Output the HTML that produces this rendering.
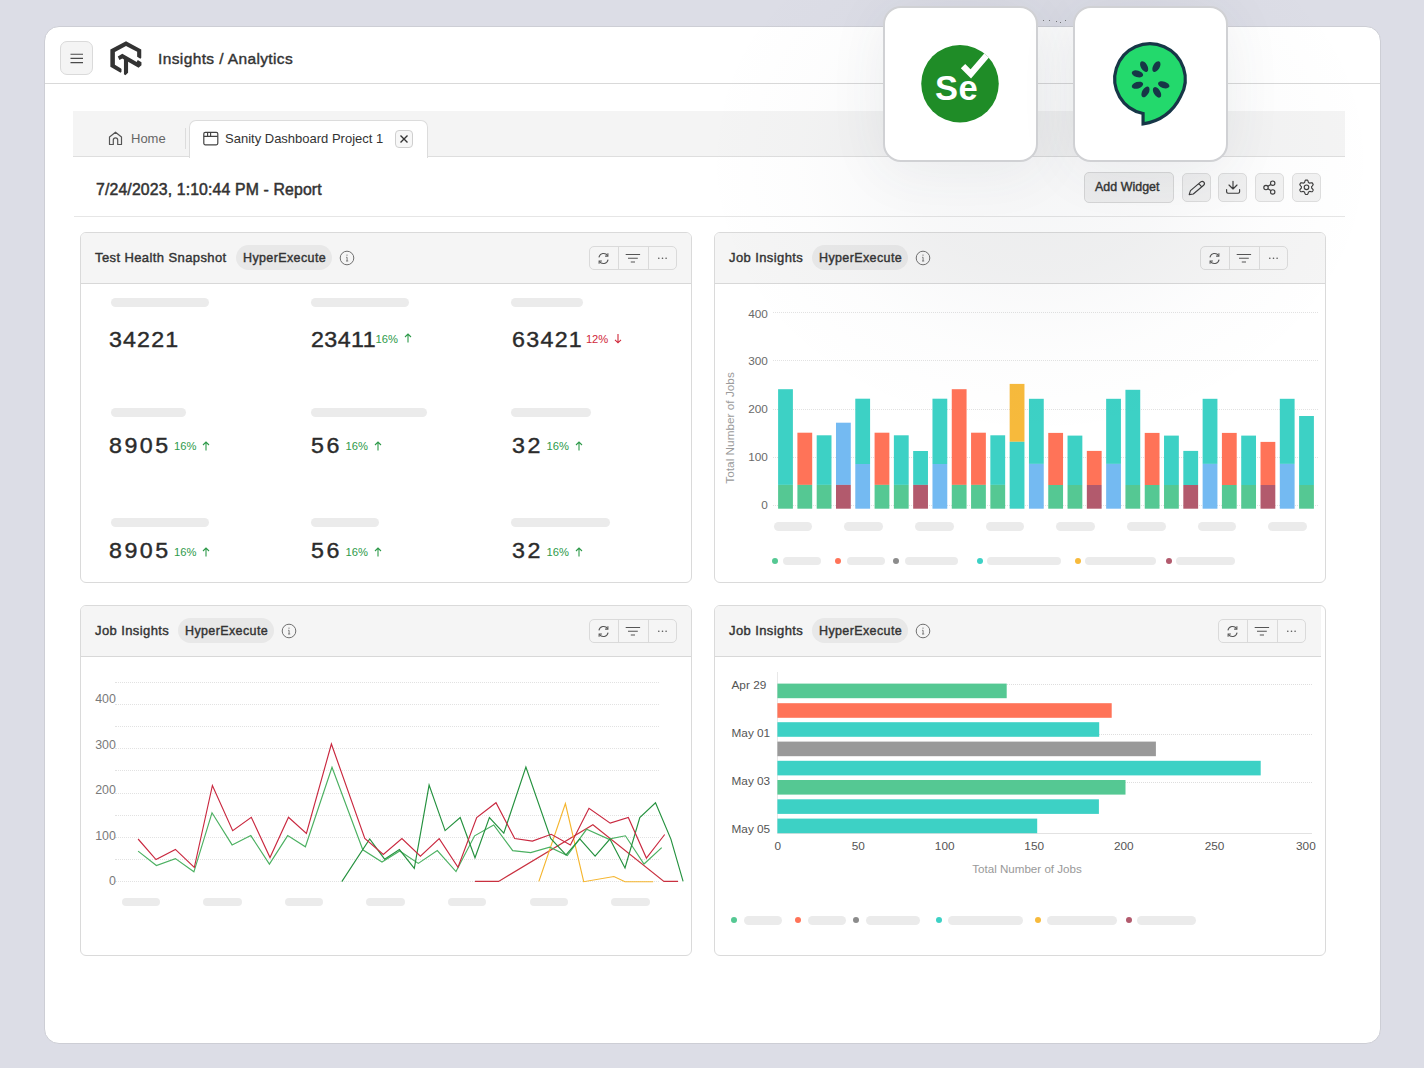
<!DOCTYPE html><html><head><meta charset="utf-8"><style>
*{margin:0;padding:0;box-sizing:border-box}
html,body{width:1424px;height:1068px;overflow:hidden;background:#dcdde6;font-family:"Liberation Sans",sans-serif;color:#2f2f2f}
div,span,svg{position:absolute}
.t{white-space:nowrap;line-height:1}
.b{font-weight:bold}
.sb{font-weight:normal;-webkit-text-stroke:0.4px currentColor}
.btn{border:1px solid #dadada;background:#f2f2f2;border-radius:5px}
.card{background:#fff;border:1px solid #dadada;border-radius:6px;overflow:hidden}
.chead{left:0;top:0;right:0;height:51px;background:#f5f5f5;border-bottom:1px solid #d8d8d8}
.pill{background:#e8e8e8;border-radius:13px}
.sk{background:#ebebeb;border-radius:5px}
.logo{z-index:6;top:6px;width:155px;height:156px;background:#fff;border:2px solid #d0d1d4;border-radius:18px;box-shadow:0 8px 60px rgba(60,70,90,0.07)}
.grp{border:1px solid #dadada;border-radius:5px}
</style></head><body>
<div style="left:44px;top:26px;width:1337px;height:1018px;background:#fff;border:1px solid #cdced5;border-radius:15px"></div>
<div style="left:45px;top:83px;width:1335px;height:1px;background:#d9d9d9"></div>
<div class="btn" style="left:60px;top:41px;width:33px;height:34px;border-radius:7px;background:#f4f4f4"></div>
<svg style="left:70px;top:53px" width="14" height="11" viewBox="0 0 14 11"><path d="M0.5 1.2h12.5M0.5 5.4h12.5M0.5 9.6h12.5" stroke="#4a4a4a" stroke-width="1.15" fill="none"/></svg>
<svg style="left:105px;top:36px" width="44" height="44" viewBox="0 0 1068 1068">
<path d="M130 330 L510 125 L880 330 L880 530 L860 555 L780 505 L780 385 L510 240 L240 390 L240 700 L380 780 L400 800 L400 865 L380 890 L130 745 Z" fill="#333"/>
<path d="M310 495 L420 430 L770 630 L795 585 L885 640 L885 710 L815 770 L560 625 L560 890 L495 950 L460 930 L460 570 L420 545 L350 580 Z" fill="#333"/>
</svg>
<span class="t sb" style="left:158px;top:51px;font-size:15.5px;color:#333;letter-spacing:0.38px">Insights / Analytics</span>
<div style="left:73px;top:111px;width:1272px;height:46px;background:#f4f4f4;border-bottom:1px solid #dedede"></div>
<svg style="left:108px;top:131px" width="15" height="15" viewBox="0 0 15 15"><path d="M1.5 13.5 V6 L7.5 1.2 L13.5 6 V13.5 H9.7 V9 A2.2 2.2 0 0 0 5.3 9 V13.5 Z" fill="none" stroke="#555" stroke-width="1.2" stroke-linejoin="round"/></svg>
<span class="t" style="left:131px;top:132px;font-size:13px;color:#666">Home</span>
<div style="left:185px;top:128px;width:1px;height:21px;background:#dcdcdc"></div>
<div style="left:189px;top:120px;width:239px;height:38px;background:#fff;border:1px solid #dcdcdc;border-bottom:none;border-radius:7px 7px 0 0"></div>
<svg style="left:203px;top:131px" width="16" height="15" viewBox="0 0 16 15"><rect x="0.8" y="1.3" width="14" height="12.5" rx="1.5" fill="none" stroke="#444" stroke-width="1.2"/><path d="M0.8 5.4 H14.8 M4.6 1.3 V5.4 M7.6 1.3 V5.4" stroke="#444" stroke-width="1.15" fill="none"/></svg>
<span class="t" style="left:225px;top:132px;font-size:13px;color:#333">Sanity Dashboard Project 1</span>
<div style="left:395px;top:130px;width:18px;height:18px;border:1px solid #cfcfcf;border-radius:4px;background:#f7f7f7"></div>
<svg style="left:399px;top:134px" width="10" height="10" viewBox="0 0 10 10"><path d="M1.5 1.5 L8.5 8.5 M8.5 1.5 L1.5 8.5" stroke="#333" stroke-width="1.4"/></svg>
<span class="t sb" style="left:96px;top:182px;font-size:15.8px;color:#333;letter-spacing:0.15px;-webkit-text-stroke:0.5px #333">7/24/2023, 1:10:44 PM - Report</span>
<div style="left:74px;top:216px;width:1271px;height:1px;background:#e6e6e6"></div>
<div class="btn" style="left:1084px;top:172px;width:90px;height:31px"></div>
<span class="t sb" style="left:1095px;top:181px;font-size:12.4px;color:#333;letter-spacing:0.05px">Add Widget</span>
<div class="btn" style="left:1182px;top:173px;width:29px;height:29px;border-color:#dedede"></div>
<div class="btn" style="left:1218px;top:173px;width:29px;height:29px;border-color:#dedede"></div>
<div class="btn" style="left:1255px;top:173px;width:29px;height:29px;border-color:#dedede"></div>
<div class="btn" style="left:1292px;top:173px;width:29px;height:29px;border-color:#dedede"></div>
<svg style="left:1182px;top:173px" width="29" height="29" viewBox="0 0 29 29"><path d="M7.2 21.6 L8.46 17.66 L18.78 8.92 A2.2 2.2 0 0 1 21.62 12.28 L11.3 21.0 Z M16.87 10.54 L19.71 13.9" fill="none" stroke="#3d3d3d" stroke-width="1.15" stroke-linejoin="round"/></svg>
<svg style="left:1218px;top:173px" width="29" height="29" viewBox="0 0 29 29"><path d="M15 8.2 V15.8 M11 12 L15 16 L19 12 M8.6 16.6 V18.8 Q8.6 20.2 10 20.2 H20.2 Q21.6 20.2 21.6 18.8 V16.6" fill="none" stroke="#3d3d3d" stroke-width="1.15" stroke-linejoin="round" stroke-linecap="round"/></svg>
<svg style="left:1255px;top:173px" width="29" height="29" viewBox="0 0 29 29"><circle cx="17.7" cy="10.2" r="2.2" fill="none" stroke="#3d3d3d" stroke-width="1.15"/><circle cx="11" cy="14.5" r="2.2" fill="none" stroke="#3d3d3d" stroke-width="1.15"/><circle cx="17.7" cy="18.9" r="2.2" fill="none" stroke="#3d3d3d" stroke-width="1.15"/><path d="M12.9 13.3 L15.8 11.4 M12.9 15.7 L15.8 17.6" stroke="#3d3d3d" stroke-width="1.15"/></svg>
<svg style="left:1292px;top:173px" width="29" height="29" viewBox="0 0 29 29"><path d="M14.50 7.05 L14.88 7.06 L15.26 7.09 L15.61 7.26 L15.89 7.76 L16.10 8.31 L16.27 8.87 L16.39 9.38 L16.59 9.60 L16.84 9.71 L17.07 9.84 L17.30 9.98 L17.53 10.13 L17.82 10.20 L18.32 10.05 L18.88 9.92 L19.47 9.83 L20.04 9.82 L20.37 10.04 L20.58 10.35 L20.78 10.68 L20.96 11.01 L21.12 11.35 L21.15 11.75 L20.86 12.23 L20.49 12.70 L20.09 13.11 L19.71 13.47 L19.62 13.76 L19.64 14.03 L19.65 14.30 L19.64 14.57 L19.62 14.84 L19.71 15.13 L20.09 15.49 L20.49 15.90 L20.86 16.37 L21.15 16.85 L21.12 17.25 L20.96 17.59 L20.78 17.93 L20.58 18.25 L20.37 18.56 L20.04 18.78 L19.47 18.77 L18.88 18.68 L18.32 18.55 L17.82 18.40 L17.53 18.47 L17.30 18.62 L17.07 18.76 L16.84 18.89 L16.59 19.00 L16.39 19.22 L16.27 19.73 L16.10 20.29 L15.89 20.84 L15.61 21.34 L15.26 21.51 L14.88 21.54 L14.50 21.55 L14.12 21.54 L13.74 21.51 L13.39 21.34 L13.11 20.84 L12.90 20.29 L12.73 19.73 L12.61 19.22 L12.41 19.00 L12.16 18.89 L11.92 18.76 L11.70 18.62 L11.47 18.47 L11.18 18.40 L10.68 18.55 L10.12 18.68 L9.53 18.77 L8.96 18.78 L8.63 18.56 L8.42 18.25 L8.22 17.93 L8.04 17.59 L7.88 17.25 L7.85 16.85 L8.14 16.37 L8.51 15.90 L8.91 15.49 L9.29 15.13 L9.38 14.84 L9.36 14.57 L9.35 14.30 L9.36 14.03 L9.38 13.76 L9.29 13.47 L8.91 13.11 L8.51 12.70 L8.14 12.23 L7.85 11.75 L7.88 11.35 L8.04 11.01 L8.22 10.68 L8.42 10.35 L8.63 10.04 L8.96 9.82 L9.53 9.83 L10.12 9.92 L10.68 10.05 L11.18 10.20 L11.47 10.13 L11.70 9.98 L11.92 9.84 L12.16 9.71 L12.41 9.60 L12.61 9.38 L12.73 8.87 L12.90 8.31 L13.11 7.76 L13.39 7.26 L13.74 7.09 L14.12 7.06Z" fill="none" stroke="#3d3d3d" stroke-width="1.15" stroke-linejoin="round"/><circle cx="14.5" cy="14.3" r="2.3" fill="none" stroke="#3d3d3d" stroke-width="1.15"/></svg>
<div style="z-index:5;left:700px;top:-120px;width:680px;height:560px;background:radial-gradient(ellipse 50% 50% at 50% 50%, rgba(60,70,90,0.05) 0%, rgba(60,70,90,0.035) 40%, rgba(60,70,90,0.012) 70%, rgba(60,70,90,0) 100%)"></div>
<div class="logo" style="left:883px"></div>
<div class="logo" style="left:1073px"></div>
<svg style="z-index:7;left:915px;top:35px" width="90" height="95" viewBox="0 0 1012 1068">
<circle cx="506" cy="548.5" r="436" fill="#1f8c27"/>
<path d="M540 350 L628 437 L805 230" fill="none" stroke="#fff" stroke-width="70"/>
</svg>
<svg style="z-index:7;left:915px;top:35px" width="90" height="95" viewBox="0 0 90 95"><text x="20" y="65.4" font-family="Liberation Sans" font-weight="bold" font-size="34.5" fill="#fff" letter-spacing="0.6">Se</text></svg>
<svg style="z-index:7;left:1105px;top:35px" width="90" height="95" viewBox="0 0 1012 1068">
<path d="M428 882.7 A396.5 396.5 0 1 1 849.4 692 Q 720 955 428 1000 Z" fill="#23d96c" stroke="#173647" stroke-width="36" stroke-linejoin="miter"/>
<ellipse cx="440" cy="355" rx="66" ry="37" transform="rotate(60 440 355)" fill="#173647"/><ellipse cx="578" cy="355" rx="66" ry="37" transform="rotate(120 578 355)" fill="#173647"/><ellipse cx="365" cy="437" rx="66" ry="37" transform="rotate(17 365 437)" fill="#173647"/><ellipse cx="365" cy="565" rx="66" ry="37" transform="rotate(-17 365 565)" fill="#173647"/><ellipse cx="660" cy="560" rx="66" ry="37" transform="rotate(17 660 560)" fill="#173647"/><ellipse cx="455" cy="640" rx="66" ry="37" transform="rotate(120 455 640)" fill="#173647"/><ellipse cx="585" cy="645" rx="66" ry="37" transform="rotate(58 585 645)" fill="#173647"/>
</svg>
<div style="left:1042.9px;top:19.799999999999997px;width:1.2px;height:1.2px;border-radius:50%;background:#555"></div>
<div style="left:1048.9px;top:19.799999999999997px;width:1.2px;height:1.2px;border-radius:50%;background:#555"></div>
<div style="left:1055.9px;top:20.799999999999997px;width:1.2px;height:1.2px;border-radius:50%;background:#555"></div>
<div style="left:1059.9px;top:21.9px;width:1.2px;height:1.2px;border-radius:50%;background:#555"></div>
<div style="left:1064.9px;top:19.799999999999997px;width:1.2px;height:1.2px;border-radius:50%;background:#555"></div>
<div class="card" style="left:80px;top:232px;width:612px;height:351px">
<div class="chead" style=""></div>
</div>
<span class="t sb" style="left:95px;top:251px;font-size:13px;color:#333;letter-spacing:0.4px">Test Health Snapshot</span>
<div class="pill" style="left:236px;top:245px;width:96px;height:25px"></div>
<span class="t sb" style="left:243px;top:252px;font-size:12.5px;color:#333;letter-spacing:0.38px">HyperExecute</span>
<svg style="left:339px;top:250px" width="16" height="16" viewBox="0 0 16 16"><circle cx="8" cy="8" r="6.8" fill="none" stroke="#707070" stroke-width="1"/><circle cx="8" cy="5.1" r="0.7" fill="#707070"/><path d="M7.1 7.3 H8.1 V11 M7 11 H9.2" stroke="#707070" stroke-width="0.9" fill="none"/></svg>
<div class="grp" style="left:589px;top:246px;width:88px;height:24px"></div>
<div style="left:618px;top:246px;width:1px;height:24px;background:#dadada"></div>
<div style="left:648px;top:246px;width:1px;height:24px;background:#dadada"></div>
<svg style="left:597px;top:252px" width="13" height="13" viewBox="0 0 13 13"><path d="M1.9 5.4 A4.8 4.8 0 0 1 10.6 3.6 M11.1 7.6 A4.8 4.8 0 0 1 2.4 9.4" fill="none" stroke="#555" stroke-width="1.05"/><path d="M10.9 1.3 V4.1 H8.1 M2.1 11.7 V8.9 H4.9" fill="none" stroke="#555" stroke-width="1.05"/></svg>
<svg style="left:625px;top:252px" width="16" height="12" viewBox="0 0 16 12"><path d="M0.7 2.4 H15.1 M3 6.3 H12.8 M5.8 9.9 H10" stroke="#555" stroke-width="1.05"/></svg>
<svg style="left:655px;top:256px" width="12" height="4" viewBox="0 0 12 4"><circle cx="3.8" cy="2.3" r="0.8" fill="#555"/><circle cx="7.5" cy="2.3" r="0.8" fill="#555"/><circle cx="11.1" cy="2.3" r="0.8" fill="#555"/></svg>
<div class="card" style="left:714px;top:232px;width:612px;height:351px">
<div class="chead" style=""></div>
</div>
<span class="t sb" style="left:729px;top:251px;font-size:13px;color:#333;letter-spacing:0.4px">Job Insights</span>
<div class="pill" style="left:812px;top:245px;width:96px;height:25px"></div>
<span class="t sb" style="left:819px;top:252px;font-size:12.5px;color:#333;letter-spacing:0.38px">HyperExecute</span>
<svg style="left:915px;top:250px" width="16" height="16" viewBox="0 0 16 16"><circle cx="8" cy="8" r="6.8" fill="none" stroke="#707070" stroke-width="1"/><circle cx="8" cy="5.1" r="0.7" fill="#707070"/><path d="M7.1 7.3 H8.1 V11 M7 11 H9.2" stroke="#707070" stroke-width="0.9" fill="none"/></svg>
<div class="grp" style="left:1200px;top:246px;width:88px;height:24px"></div>
<div style="left:1229px;top:246px;width:1px;height:24px;background:#dadada"></div>
<div style="left:1259px;top:246px;width:1px;height:24px;background:#dadada"></div>
<svg style="left:1208px;top:252px" width="13" height="13" viewBox="0 0 13 13"><path d="M1.9 5.4 A4.8 4.8 0 0 1 10.6 3.6 M11.1 7.6 A4.8 4.8 0 0 1 2.4 9.4" fill="none" stroke="#555" stroke-width="1.05"/><path d="M10.9 1.3 V4.1 H8.1 M2.1 11.7 V8.9 H4.9" fill="none" stroke="#555" stroke-width="1.05"/></svg>
<svg style="left:1236px;top:252px" width="16" height="12" viewBox="0 0 16 12"><path d="M0.7 2.4 H15.1 M3 6.3 H12.8 M5.8 9.9 H10" stroke="#555" stroke-width="1.05"/></svg>
<svg style="left:1266px;top:256px" width="12" height="4" viewBox="0 0 12 4"><circle cx="3.8" cy="2.3" r="0.8" fill="#555"/><circle cx="7.5" cy="2.3" r="0.8" fill="#555"/><circle cx="11.1" cy="2.3" r="0.8" fill="#555"/></svg>
<div class="card" style="left:80px;top:605px;width:612px;height:351px">
<div class="chead" style=""></div>
</div>
<span class="t sb" style="left:95px;top:624px;font-size:13px;color:#333;letter-spacing:0.4px">Job Insights</span>
<div class="pill" style="left:178px;top:618px;width:96px;height:25px"></div>
<span class="t sb" style="left:185px;top:625px;font-size:12.5px;color:#333;letter-spacing:0.38px">HyperExecute</span>
<svg style="left:281px;top:623px" width="16" height="16" viewBox="0 0 16 16"><circle cx="8" cy="8" r="6.8" fill="none" stroke="#707070" stroke-width="1"/><circle cx="8" cy="5.1" r="0.7" fill="#707070"/><path d="M7.1 7.3 H8.1 V11 M7 11 H9.2" stroke="#707070" stroke-width="0.9" fill="none"/></svg>
<div class="grp" style="left:589px;top:619px;width:88px;height:24px"></div>
<div style="left:618px;top:619px;width:1px;height:24px;background:#dadada"></div>
<div style="left:648px;top:619px;width:1px;height:24px;background:#dadada"></div>
<svg style="left:597px;top:625px" width="13" height="13" viewBox="0 0 13 13"><path d="M1.9 5.4 A4.8 4.8 0 0 1 10.6 3.6 M11.1 7.6 A4.8 4.8 0 0 1 2.4 9.4" fill="none" stroke="#555" stroke-width="1.05"/><path d="M10.9 1.3 V4.1 H8.1 M2.1 11.7 V8.9 H4.9" fill="none" stroke="#555" stroke-width="1.05"/></svg>
<svg style="left:625px;top:625px" width="16" height="12" viewBox="0 0 16 12"><path d="M0.7 2.4 H15.1 M3 6.3 H12.8 M5.8 9.9 H10" stroke="#555" stroke-width="1.05"/></svg>
<svg style="left:655px;top:629px" width="12" height="4" viewBox="0 0 12 4"><circle cx="3.8" cy="2.3" r="0.8" fill="#555"/><circle cx="7.5" cy="2.3" r="0.8" fill="#555"/><circle cx="11.1" cy="2.3" r="0.8" fill="#555"/></svg>
<div class="card" style="left:714px;top:605px;width:612px;height:351px">
<div class="chead" style="width:606px;right:auto;"></div>
</div>
<span class="t sb" style="left:729px;top:624px;font-size:13px;color:#333;letter-spacing:0.4px">Job Insights</span>
<div class="pill" style="left:812px;top:618px;width:96px;height:25px"></div>
<span class="t sb" style="left:819px;top:625px;font-size:12.5px;color:#333;letter-spacing:0.38px">HyperExecute</span>
<svg style="left:915px;top:623px" width="16" height="16" viewBox="0 0 16 16"><circle cx="8" cy="8" r="6.8" fill="none" stroke="#707070" stroke-width="1"/><circle cx="8" cy="5.1" r="0.7" fill="#707070"/><path d="M7.1 7.3 H8.1 V11 M7 11 H9.2" stroke="#707070" stroke-width="0.9" fill="none"/></svg>
<div class="grp" style="left:1218px;top:619px;width:88px;height:24px"></div>
<div style="left:1247px;top:619px;width:1px;height:24px;background:#dadada"></div>
<div style="left:1277px;top:619px;width:1px;height:24px;background:#dadada"></div>
<svg style="left:1226px;top:625px" width="13" height="13" viewBox="0 0 13 13"><path d="M1.9 5.4 A4.8 4.8 0 0 1 10.6 3.6 M11.1 7.6 A4.8 4.8 0 0 1 2.4 9.4" fill="none" stroke="#555" stroke-width="1.05"/><path d="M10.9 1.3 V4.1 H8.1 M2.1 11.7 V8.9 H4.9" fill="none" stroke="#555" stroke-width="1.05"/></svg>
<svg style="left:1254px;top:625px" width="16" height="12" viewBox="0 0 16 12"><path d="M0.7 2.4 H15.1 M3 6.3 H12.8 M5.8 9.9 H10" stroke="#555" stroke-width="1.05"/></svg>
<svg style="left:1284px;top:629px" width="12" height="4" viewBox="0 0 12 4"><circle cx="3.8" cy="2.3" r="0.8" fill="#555"/><circle cx="7.5" cy="2.3" r="0.8" fill="#555"/><circle cx="11.1" cy="2.3" r="0.8" fill="#555"/></svg>
<div class="sk" style="left:111px;top:298px;width:98px;height:9px;border-radius:5px"></div>
<span class="t" style="left:109.4px;top:330.3px;font-size:21.5px;letter-spacing:1.05px;transform:scaleX(1.08);transform-origin:0 0;color:#2b2b2b;-webkit-text-stroke:0.4px #2b2b2b">34221</span>
<div class="sk" style="left:311px;top:298px;width:98px;height:9px;border-radius:5px"></div>
<span class="t" style="left:310.9px;top:330.3px;font-size:21.5px;letter-spacing:0.4px;transform:scaleX(1.08);transform-origin:0 0;color:#2b2b2b;-webkit-text-stroke:0.4px #2b2b2b">23411</span>
<div class="sk" style="left:511px;top:298px;width:72px;height:9px;border-radius:5px"></div>
<span class="t" style="left:511.9px;top:330.3px;font-size:21.5px;letter-spacing:1.2px;transform:scaleX(1.08);transform-origin:0 0;color:#2b2b2b;-webkit-text-stroke:0.4px #2b2b2b">63421</span>
<div class="sk" style="left:111px;top:408px;width:75px;height:9px;border-radius:5px"></div>
<span class="t" style="left:109.4px;top:435.5px;font-size:21.5px;letter-spacing:2.3px;transform:scaleX(1.08);transform-origin:0 0;color:#2b2b2b;-webkit-text-stroke:0.4px #2b2b2b">8905</span>
<div class="sk" style="left:311px;top:408px;width:116px;height:9px;border-radius:5px"></div>
<span class="t" style="left:310.9px;top:435.5px;font-size:21.5px;letter-spacing:2.4px;transform:scaleX(1.08);transform-origin:0 0;color:#2b2b2b;-webkit-text-stroke:0.4px #2b2b2b">56</span>
<div class="sk" style="left:511px;top:408px;width:80px;height:9px;border-radius:5px"></div>
<span class="t" style="left:511.9px;top:435.5px;font-size:21.5px;letter-spacing:2.4px;transform:scaleX(1.08);transform-origin:0 0;color:#2b2b2b;-webkit-text-stroke:0.4px #2b2b2b">32</span>
<div class="sk" style="left:111px;top:518px;width:98px;height:9px;border-radius:5px"></div>
<span class="t" style="left:109.4px;top:541.3px;font-size:21.5px;letter-spacing:2.3px;transform:scaleX(1.08);transform-origin:0 0;color:#2b2b2b;-webkit-text-stroke:0.4px #2b2b2b">8905</span>
<div class="sk" style="left:311px;top:518px;width:68px;height:9px;border-radius:5px"></div>
<span class="t" style="left:310.9px;top:541.3px;font-size:21.5px;letter-spacing:2.4px;transform:scaleX(1.08);transform-origin:0 0;color:#2b2b2b;-webkit-text-stroke:0.4px #2b2b2b">56</span>
<div class="sk" style="left:511px;top:518px;width:99px;height:9px;border-radius:5px"></div>
<span class="t" style="left:511.9px;top:541.3px;font-size:21.5px;letter-spacing:2.4px;transform:scaleX(1.08);transform-origin:0 0;color:#2b2b2b;-webkit-text-stroke:0.4px #2b2b2b">32</span>
<span class="t" style="left:375.5px;top:334px;font-size:11.2px;color:#2e9a4a">16%</span>
<svg style="left:403.5px;top:333.4px" width="8" height="10" viewBox="0 0 8 10"><path d="M4 9.5 V1 M1 4 L4 1 L7 4" fill="none" stroke="#2e9a4a" stroke-width="1.1"/></svg>
<span class="t" style="left:585.9px;top:334px;font-size:11.2px;color:#d0283a">12%</span>
<svg style="left:614.4px;top:334px" width="8" height="10" viewBox="0 0 8 10"><path d="M4 0 V8.8 M1 5.8 L4 8.8 L7 5.8" fill="none" stroke="#d0283a" stroke-width="1.1"/></svg>
<span class="t" style="left:174.1px;top:441.2px;font-size:11.2px;color:#2e9a4a">16%</span>
<svg style="left:202.1px;top:440.59999999999997px" width="8" height="10" viewBox="0 0 8 10"><path d="M4 9.5 V1 M1 4 L4 1 L7 4" fill="none" stroke="#2e9a4a" stroke-width="1.1"/></svg>
<span class="t" style="left:345.5px;top:441.2px;font-size:11.2px;color:#2e9a4a">16%</span>
<svg style="left:373.5px;top:440.59999999999997px" width="8" height="10" viewBox="0 0 8 10"><path d="M4 9.5 V1 M1 4 L4 1 L7 4" fill="none" stroke="#2e9a4a" stroke-width="1.1"/></svg>
<span class="t" style="left:546.5px;top:441.2px;font-size:11.2px;color:#2e9a4a">16%</span>
<svg style="left:574.5px;top:440.59999999999997px" width="8" height="10" viewBox="0 0 8 10"><path d="M4 9.5 V1 M1 4 L4 1 L7 4" fill="none" stroke="#2e9a4a" stroke-width="1.1"/></svg>
<span class="t" style="left:174.1px;top:547.2px;font-size:11.2px;color:#2e9a4a">16%</span>
<svg style="left:202.1px;top:546.6px" width="8" height="10" viewBox="0 0 8 10"><path d="M4 9.5 V1 M1 4 L4 1 L7 4" fill="none" stroke="#2e9a4a" stroke-width="1.1"/></svg>
<span class="t" style="left:345.5px;top:547.2px;font-size:11.2px;color:#2e9a4a">16%</span>
<svg style="left:373.5px;top:546.6px" width="8" height="10" viewBox="0 0 8 10"><path d="M4 9.5 V1 M1 4 L4 1 L7 4" fill="none" stroke="#2e9a4a" stroke-width="1.1"/></svg>
<span class="t" style="left:546.5px;top:547.2px;font-size:11.2px;color:#2e9a4a">16%</span>
<svg style="left:574.5px;top:546.6px" width="8" height="10" viewBox="0 0 8 10"><path d="M4 9.5 V1 M1 4 L4 1 L7 4" fill="none" stroke="#2e9a4a" stroke-width="1.1"/></svg>
<div style="left:773px;top:312px;width:545px;height:0;border-top:1px dotted #e2e2e2"></div>
<span class="t" style="right:656.2px;top:308.7px;font-size:11.8px;color:#6a6a6a">400</span>
<div style="left:773px;top:360px;width:545px;height:0;border-top:1px dotted #e2e2e2"></div>
<span class="t" style="right:656.2px;top:356.40000000000003px;font-size:11.8px;color:#6a6a6a">300</span>
<div style="left:773px;top:409px;width:545px;height:0;border-top:1px dotted #e2e2e2"></div>
<span class="t" style="right:656.2px;top:404.45px;font-size:11.8px;color:#6a6a6a">200</span>
<div style="left:773px;top:457px;width:545px;height:0;border-top:1px dotted #e2e2e2"></div>
<span class="t" style="right:656.2px;top:452.1px;font-size:11.8px;color:#6a6a6a">100</span>
<div style="left:773px;top:505px;width:545px;height:0;border-top:1px dotted #e2e2e2"></div>
<span class="t" style="right:656.2px;top:499.8px;font-size:11.8px;color:#6a6a6a">0</span>
<span class="t" style="left:671px;top:422px;width:120px;text-align:center;font-size:11.8px;color:#9a9a9a;transform:rotate(-90deg)">Total Number of Jobs</span>
<svg style="left:0;top:0" width="1424" height="1068" viewBox="0 0 1424 1068"><rect x="778.10" y="389.20" width="14.8" height="95.70" fill="#3dd1c5"/><rect x="778.10" y="484.90" width="14.8" height="23.80" fill="#55c893"/><rect x="797.40" y="432.70" width="14.8" height="52.20" fill="#ff7358"/><rect x="797.40" y="484.90" width="14.8" height="23.80" fill="#55c893"/><rect x="816.69" y="435.30" width="14.8" height="49.60" fill="#3dd1c5"/><rect x="816.69" y="484.90" width="14.8" height="23.80" fill="#55c893"/><rect x="835.99" y="422.70" width="14.8" height="62.20" fill="#74baf2"/><rect x="835.99" y="484.90" width="14.8" height="23.80" fill="#b25a6d"/><rect x="855.29" y="398.70" width="14.8" height="65.30" fill="#3dd1c5"/><rect x="855.29" y="464.00" width="14.8" height="44.70" fill="#74baf2"/><rect x="874.58" y="432.70" width="14.8" height="52.20" fill="#ff7358"/><rect x="874.58" y="484.90" width="14.8" height="23.80" fill="#55c893"/><rect x="893.88" y="435.30" width="14.8" height="49.60" fill="#3dd1c5"/><rect x="893.88" y="484.90" width="14.8" height="23.80" fill="#55c893"/><rect x="913.17" y="451.00" width="14.8" height="33.90" fill="#3dd1c5"/><rect x="913.17" y="484.90" width="14.8" height="23.80" fill="#b25a6d"/><rect x="932.47" y="398.70" width="14.8" height="65.30" fill="#3dd1c5"/><rect x="932.47" y="464.00" width="14.8" height="44.70" fill="#74baf2"/><rect x="951.77" y="389.20" width="14.8" height="95.70" fill="#ff7358"/><rect x="951.77" y="484.90" width="14.8" height="23.80" fill="#55c893"/><rect x="971.06" y="432.70" width="14.8" height="52.20" fill="#ff7358"/><rect x="971.06" y="484.90" width="14.8" height="23.80" fill="#55c893"/><rect x="990.36" y="435.30" width="14.8" height="49.60" fill="#3dd1c5"/><rect x="990.36" y="484.90" width="14.8" height="23.80" fill="#55c893"/><rect x="1009.66" y="383.90" width="14.8" height="57.90" fill="#f7ba3c"/><rect x="1009.66" y="441.80" width="14.8" height="66.90" fill="#3dd1c5"/><rect x="1028.95" y="398.80" width="14.8" height="65.10" fill="#3dd1c5"/><rect x="1028.95" y="463.90" width="14.8" height="44.80" fill="#74baf2"/><rect x="1048.25" y="432.90" width="14.8" height="52.10" fill="#ff7358"/><rect x="1048.25" y="485.00" width="14.8" height="23.70" fill="#55c893"/><rect x="1067.54" y="435.60" width="14.8" height="49.40" fill="#3dd1c5"/><rect x="1067.54" y="485.00" width="14.8" height="23.70" fill="#55c893"/><rect x="1086.84" y="450.90" width="14.8" height="34.10" fill="#ff7358"/><rect x="1086.84" y="485.00" width="14.8" height="23.70" fill="#b25a6d"/><rect x="1106.14" y="398.80" width="14.8" height="65.10" fill="#3dd1c5"/><rect x="1106.14" y="463.90" width="14.8" height="44.80" fill="#74baf2"/><rect x="1125.43" y="389.80" width="14.8" height="95.20" fill="#3dd1c5"/><rect x="1125.43" y="485.00" width="14.8" height="23.70" fill="#55c893"/><rect x="1144.73" y="432.90" width="14.8" height="52.10" fill="#ff7358"/><rect x="1144.73" y="485.00" width="14.8" height="23.70" fill="#55c893"/><rect x="1164.03" y="435.60" width="14.8" height="49.40" fill="#3dd1c5"/><rect x="1164.03" y="485.00" width="14.8" height="23.70" fill="#55c893"/><rect x="1183.32" y="450.90" width="14.8" height="34.10" fill="#3dd1c5"/><rect x="1183.32" y="485.00" width="14.8" height="23.70" fill="#b25a6d"/><rect x="1202.62" y="398.80" width="14.8" height="65.10" fill="#3dd1c5"/><rect x="1202.62" y="463.90" width="14.8" height="44.80" fill="#74baf2"/><rect x="1221.91" y="432.90" width="14.8" height="52.10" fill="#ff7358"/><rect x="1221.91" y="485.00" width="14.8" height="23.70" fill="#55c893"/><rect x="1241.21" y="435.60" width="14.8" height="49.40" fill="#3dd1c5"/><rect x="1241.21" y="485.00" width="14.8" height="23.70" fill="#55c893"/><rect x="1260.51" y="441.90" width="14.8" height="43.10" fill="#ff7358"/><rect x="1260.51" y="485.00" width="14.8" height="23.70" fill="#b25a6d"/><rect x="1279.80" y="398.80" width="14.8" height="65.10" fill="#3dd1c5"/><rect x="1279.80" y="463.90" width="14.8" height="44.80" fill="#74baf2"/><rect x="1299.10" y="416.00" width="14.8" height="69.00" fill="#3dd1c5"/><rect x="1299.10" y="485.00" width="14.8" height="23.70" fill="#55c893"/></svg>
<div class="sk" style="left:773.8px;top:522px;width:38.5px;height:8.5px;border-radius:4.5px"></div>
<div class="sk" style="left:844.4px;top:522px;width:38.5px;height:8.5px;border-radius:4.5px"></div>
<div class="sk" style="left:915.1px;top:522px;width:38.5px;height:8.5px;border-radius:4.5px"></div>
<div class="sk" style="left:985.8px;top:522px;width:38.5px;height:8.5px;border-radius:4.5px"></div>
<div class="sk" style="left:1056.4px;top:522px;width:38.5px;height:8.5px;border-radius:4.5px"></div>
<div class="sk" style="left:1127.0px;top:522px;width:38.5px;height:8.5px;border-radius:4.5px"></div>
<div class="sk" style="left:1197.7px;top:522px;width:38.5px;height:8.5px;border-radius:4.5px"></div>
<div class="sk" style="left:1268.3px;top:522px;width:38.5px;height:8.5px;border-radius:4.5px"></div>
<div style="left:771.9px;top:558px;width:6px;height:6px;border-radius:50%;background:#55c893"></div>
<div class="sk" style="left:782.5px;top:556.5px;width:38.5px;height:8px;border-radius:4px"></div>
<div style="left:835.2px;top:558px;width:6px;height:6px;border-radius:50%;background:#ff7358"></div>
<div class="sk" style="left:847.1px;top:556.5px;width:38.1px;height:8px;border-radius:4px"></div>
<div style="left:893.1px;top:558px;width:6px;height:6px;border-radius:50%;background:#8c8c8c"></div>
<div class="sk" style="left:905px;top:556.5px;width:53.1px;height:8px;border-radius:4px"></div>
<div style="left:976.7px;top:558px;width:6px;height:6px;border-radius:50%;background:#3dd1c5"></div>
<div class="sk" style="left:986.7px;top:556.5px;width:74.3px;height:8px;border-radius:4px"></div>
<div style="left:1075px;top:558px;width:6px;height:6px;border-radius:50%;background:#f7ba3c"></div>
<div class="sk" style="left:1085.2px;top:556.5px;width:70.5px;height:8px;border-radius:4px"></div>
<div style="left:1166px;top:558px;width:6px;height:6px;border-radius:50%;background:#b25a6d"></div>
<div class="sk" style="left:1175.5px;top:556.5px;width:59.8px;height:8px;border-radius:4px"></div>
<div style="left:115px;top:682px;width:544px;height:0;border-top:1px dotted #e2e2e2"></div>
<div style="left:115px;top:704.1px;width:544px;height:0;border-top:1px dotted #e2e2e2"></div>
<div style="left:115px;top:726.2px;width:544px;height:0;border-top:1px dotted #e2e2e2"></div>
<div style="left:115px;top:748.3px;width:544px;height:0;border-top:1px dotted #e2e2e2"></div>
<div style="left:115px;top:770.4px;width:544px;height:0;border-top:1px dotted #e2e2e2"></div>
<div style="left:115px;top:792.5px;width:544px;height:0;border-top:1px dotted #e2e2e2"></div>
<div style="left:115px;top:814.6px;width:544px;height:0;border-top:1px dotted #e2e2e2"></div>
<div style="left:115px;top:836.7px;width:544px;height:0;border-top:1px dotted #e2e2e2"></div>
<div style="left:115px;top:858.8px;width:544px;height:0;border-top:1px dotted #e2e2e2"></div>
<div style="left:115px;top:880.9px;width:544px;height:0;border-top:1px dotted #e2e2e2"></div>
<span class="t" style="right:1308.2px;top:693.1px;font-size:12.4px;color:#7a7a7a">400</span>
<span class="t" style="right:1308.2px;top:738.7px;font-size:12.4px;color:#7a7a7a">300</span>
<span class="t" style="right:1308.2px;top:784.2px;font-size:12.4px;color:#7a7a7a">200</span>
<span class="t" style="right:1308.2px;top:829.7px;font-size:12.4px;color:#7a7a7a">100</span>
<span class="t" style="right:1308.2px;top:874.5px;font-size:12.4px;color:#7a7a7a">0</span>
<div class="sk" style="left:121.5px;top:897.5px;width:38.5px;height:8.5px;border-radius:4.5px"></div>
<div class="sk" style="left:203.1px;top:897.5px;width:38.5px;height:8.5px;border-radius:4.5px"></div>
<div class="sk" style="left:284.7px;top:897.5px;width:38.5px;height:8.5px;border-radius:4.5px"></div>
<div class="sk" style="left:366.3px;top:897.5px;width:38.5px;height:8.5px;border-radius:4.5px"></div>
<div class="sk" style="left:447.9px;top:897.5px;width:38.5px;height:8.5px;border-radius:4.5px"></div>
<div class="sk" style="left:529.5px;top:897.5px;width:38.5px;height:8.5px;border-radius:4.5px"></div>
<div class="sk" style="left:611.1px;top:897.5px;width:38.5px;height:8.5px;border-radius:4.5px"></div>
<svg style="left:0;top:0" width="1424" height="1068" viewBox="0 0 1424 1068"><polyline points="475,881.4 498.6,881.4 592.9,824.7 663.9,881.4 678.1,881.4" fill="none" stroke="#c9303f" stroke-width="1.15" stroke-linejoin="miter"/><polyline points="538.9,881.4 565.4,803.5 583.7,881.7 613.9,876.5 625,881.7 653.2,881.7" fill="none" stroke="#f5b52e" stroke-width="1.15" stroke-linejoin="miter"/><polyline points="138.1,851.1 156.4,865.5 175.4,858.6 193.9,871.8 212,812.8 232.1,844.9 250.8,835.6 269.4,864.1 287.7,835.6 305.4,846.8 332,767.2 362.8,849.8 382,862 399.7,850.9 418.3,863.4 437.3,850.6 456,871.6 474.6,835.8 493.7,825 512.7,850.6 530.7,852.6 549.7,847.2 567.3,855.5 586.6,829.3 608.6,839.1 625.4,835.8 644,864 661.7,847.6" fill="none" stroke="#4bb061" stroke-width="1.15" stroke-linejoin="miter"/><polyline points="341.8,881.6 369.7,839 384.6,859.2 399.4,849.6 414.3,868.3 429.1,785.1 445.1,830.6 460.2,817.5 475,857.7 489.4,817.5 503.8,833.2 525.9,767 550.7,838.5 566,854.8 579.8,838.8 595.1,856.1 609.9,839.1 625,868 639.8,817.5 655.5,802.8 670.9,839.1 683.1,881.4" fill="none" stroke="#24913e" stroke-width="1.15" stroke-linejoin="miter"/><polyline points="138.1,839 156,859.6 175.4,849.4 194.3,867.5 212.4,785.5 232.7,830.7 251.3,817.3 270,857.6 288.5,817.3 306.4,833.4 331.4,744 364.8,838.4 383.3,854.4 401.9,838.5 420.4,856.1 439.2,838.7 458,867.3 476.7,817.5 496,802.7 514.7,838.5 532.4,841.1 551.2,834.3 570.4,845 589,808.3 610.2,823.1 628.3,817.5 646.4,858.1 664.7,834.5" fill="none" stroke="#c9283f" stroke-width="1.15" stroke-linejoin="miter"/></svg>
<div style="left:777.5px;top:683.6px;width:534px;height:0;border-top:1px dotted #dedede"></div>
<div style="left:777.5px;top:733.9px;width:534px;height:0;border-top:1px dotted #dedede"></div>
<div style="left:777.5px;top:781.7px;width:534px;height:0;border-top:1px dotted #dedede"></div>
<div style="left:777px;top:833px;width:535px;height:1px;background:#e2e2e2"></div>
<div style="left:777px;top:672px;width:1px;height:162px;background:#e8e8e8"></div>
<span class="t" style="left:731.5px;top:680.4px;font-size:11.8px;color:#555">Apr 29</span>
<span class="t" style="left:731.5px;top:728.3000000000001px;font-size:11.8px;color:#555">May 01</span>
<span class="t" style="left:731.5px;top:776.1px;font-size:11.8px;color:#555">May 03</span>
<span class="t" style="left:731.5px;top:823.7px;font-size:11.8px;color:#555">May 05</span>
<span class="t" style="left:747.8px;width:60px;text-align:center;top:840.6px;font-size:11.8px;color:#555">0</span>
<span class="t" style="left:828.3px;width:60px;text-align:center;top:840.6px;font-size:11.8px;color:#555">50</span>
<span class="t" style="left:914.7px;width:60px;text-align:center;top:840.6px;font-size:11.8px;color:#555">100</span>
<span class="t" style="left:1004.2px;width:60px;text-align:center;top:840.6px;font-size:11.8px;color:#555">150</span>
<span class="t" style="left:1093.8px;width:60px;text-align:center;top:840.6px;font-size:11.8px;color:#555">200</span>
<span class="t" style="left:1184.5px;width:60px;text-align:center;top:840.6px;font-size:11.8px;color:#555">250</span>
<span class="t" style="left:1275.9px;width:60px;text-align:center;top:840.6px;font-size:11.8px;color:#555">300</span>
<span class="t" style="left:927px;width:200px;text-align:center;top:863px;font-size:11.6px;color:#999">Total Number of Jobs</span>
<svg style="left:0;top:0" width="1424" height="1068" viewBox="0 0 1424 1068"><rect x="777.4" y="683.6" width="229.3" height="14.6" fill="#55c893"/><rect x="777.4" y="703.2" width="334.3" height="14.6" fill="#ff7358"/><rect x="777.4" y="722.2" width="321.8" height="14.6" fill="#3dd1c5"/><rect x="777.4" y="741.6" width="378.5" height="14.6" fill="#999999"/><rect x="777.4" y="760.8" width="483.3" height="14.6" fill="#3dd1c5"/><rect x="777.4" y="780" width="348.1" height="14.6" fill="#55c893"/><rect x="777.4" y="799.3" width="321.5" height="14.6" fill="#3dd1c5"/><rect x="777.4" y="818.6" width="259.8" height="14.6" fill="#3dd1c5"/></svg>
<div style="left:731.3px;top:917px;width:6px;height:6px;border-radius:50%;background:#55c893"></div>
<div class="sk" style="left:743.7px;top:916px;width:38.8px;height:8.5px;border-radius:4.5px"></div>
<div style="left:794.7px;top:917px;width:6px;height:6px;border-radius:50%;background:#ff7358"></div>
<div class="sk" style="left:808.1px;top:916px;width:38.4px;height:8.5px;border-radius:4.5px"></div>
<div style="left:852.7px;top:917px;width:6px;height:6px;border-radius:50%;background:#8c8c8c"></div>
<div class="sk" style="left:866.1px;top:916px;width:53.6px;height:8.5px;border-radius:4.5px"></div>
<div style="left:936.3px;top:917px;width:6px;height:6px;border-radius:50%;background:#3dd1c5"></div>
<div class="sk" style="left:948px;top:916px;width:74.9px;height:8.5px;border-radius:4.5px"></div>
<div style="left:1034.5px;top:917px;width:6px;height:6px;border-radius:50%;background:#f7ba3c"></div>
<div class="sk" style="left:1046.6px;top:916px;width:70.5px;height:8.5px;border-radius:4.5px"></div>
<div style="left:1125.6px;top:917px;width:6px;height:6px;border-radius:50%;background:#b25a6d"></div>
<div class="sk" style="left:1136.7px;top:916px;width:59.6px;height:8.5px;border-radius:4.5px"></div>
</body></html>
